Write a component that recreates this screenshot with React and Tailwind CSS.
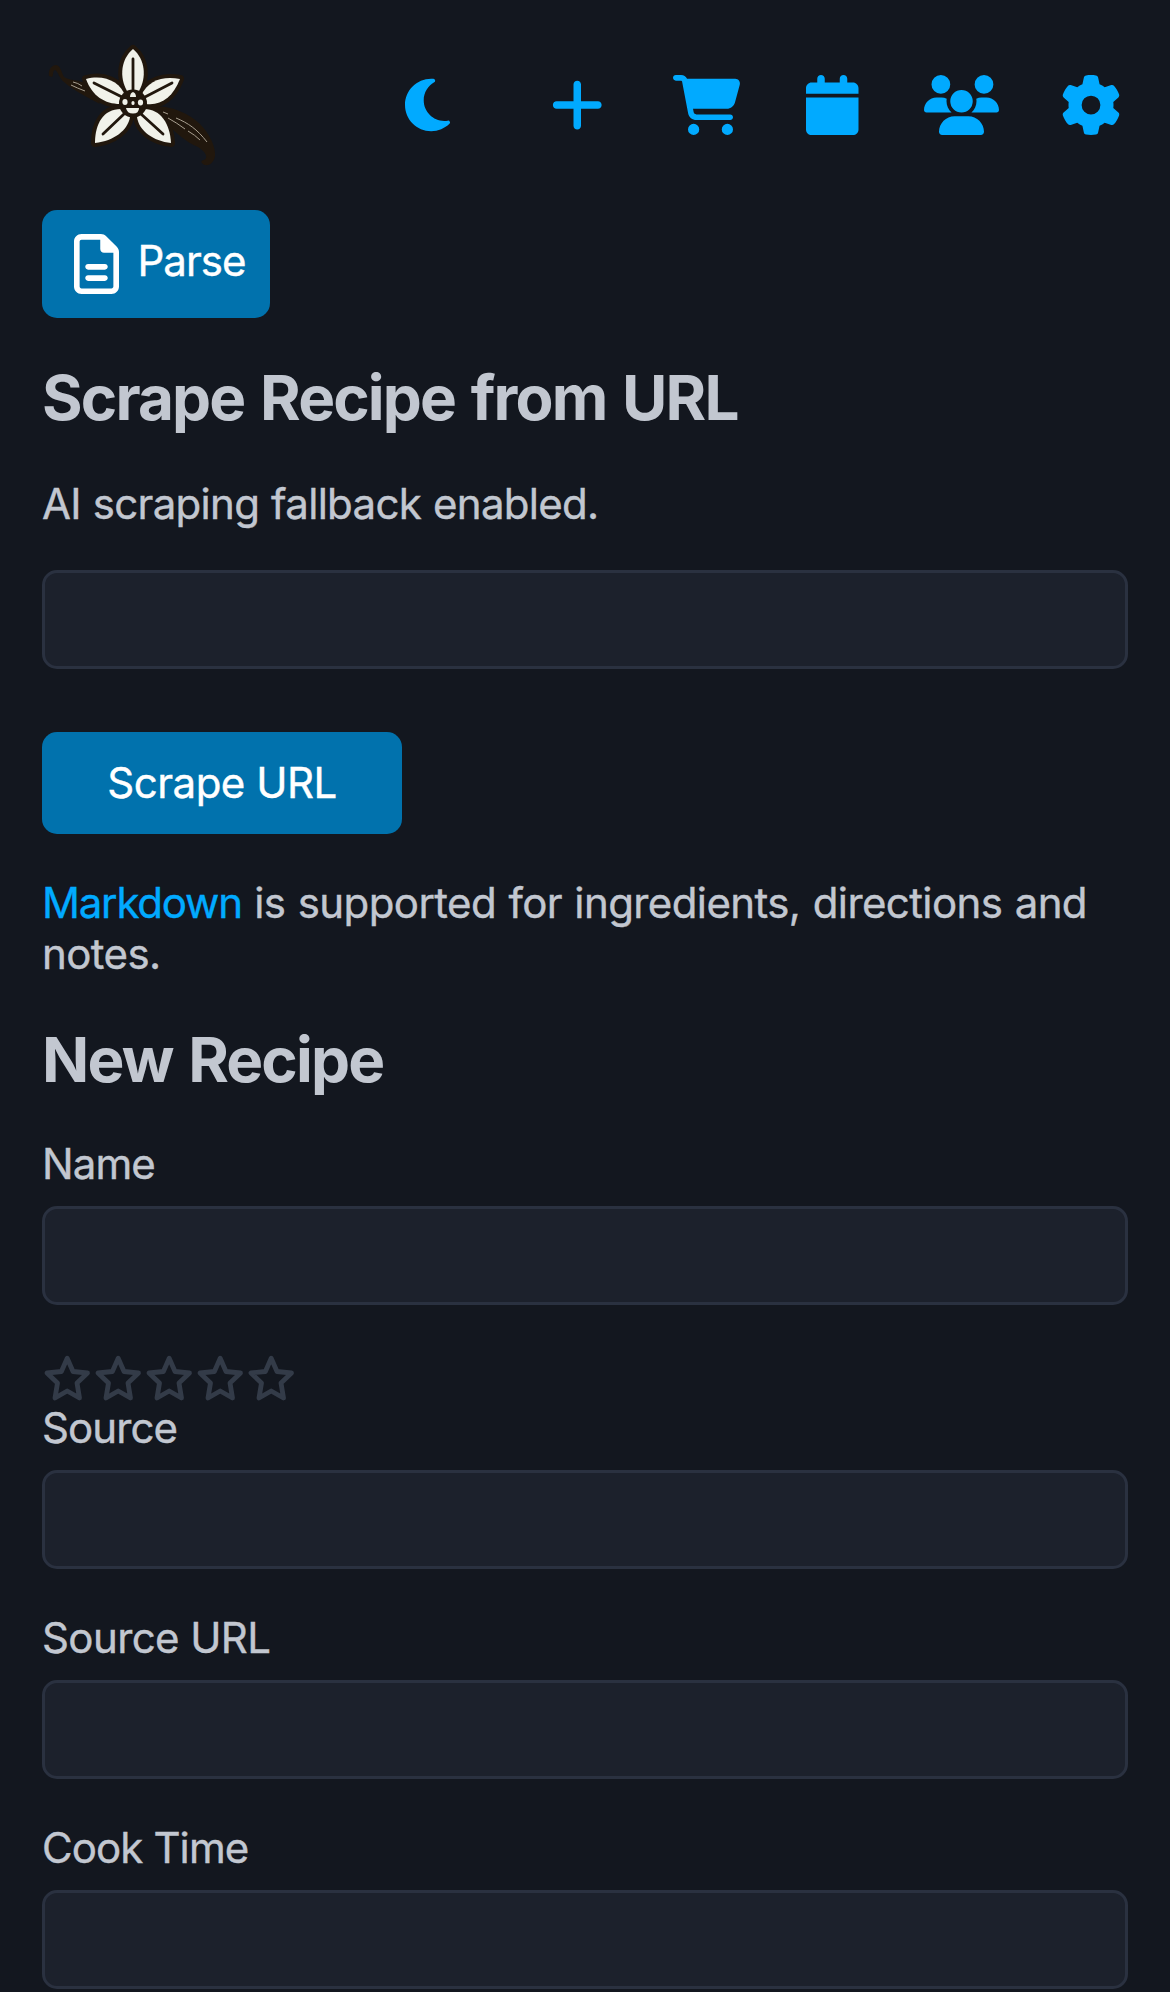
import { FaMoon, FaPlus, FaCartShopping, FaCalendar, FaUsers, FaGear, FaRegFileLines } from "react-icons/fa6";

function VanillaLogo() {
  return (
    <svg viewBox="0 0 200 150" className="h-[150px] w-[200px] shrink-0" fill="none" aria-label="Vanilla flower">
      <path d="M19 46C18 39 22 35 26 35C31 36 31 42 34 47C38 50 47 50 56 53L70 74C56 67 42 59 34 52C29 48 28 41 25 40C22 41 24 45 22 47Z" fill="#21170d" />
      <path d="M122 76C143 76 158 83 170 94C180 104 186 118 185 126C184 132 180 136 175 135C171 134 170 130 174 130C179 128 175 121 168 117C156 112 147 104 136 93Z" fill="#21170d" />
      <path d="M41 55Q47 58 55 61M43 52Q48 53 52 56M133 82L138 84M138 88Q147 93 155 99M146 88C158 93 167 99 177 112M158 101Q165 105 170 110" stroke="#a89f90" strokeWidth="1" />
      <g stroke="#21170d" strokeWidth="8" strokeLinejoin="round" fill="#21170d">
        <path d="M97 61C89 47 91 29 103 19C115 29 117 47 109 61Z" />
        <path d="M90 74C75 74 62 66 56 49C74 44 91 52 95 66Z" />
        <path d="M111 66C118 50 133 46 150 49C143 67 131 76 116 74Z" />
        <path d="M91 79C73 79 65 94 65 113C84 111 98 100 100 87Z" />
        <path d="M107 87C109 101 123 111 141 113C140 94 131 79 114 79Z" />
      </g>
      <g fill="#f1f2ea">
        <path d="M97 61C89 47 91 29 103 19C115 29 117 47 109 61Z" />
        <path d="M90 74C75 74 62 66 56 49C74 44 91 52 95 66Z" />
        <path d="M111 66C118 50 133 46 150 49C143 67 131 76 116 74Z" />
        <path d="M91 79C73 79 65 94 65 113C84 111 98 100 100 87Z" />
        <path d="M107 87C109 101 123 111 141 113C140 94 131 79 114 79Z" />
      </g>
      <path d="M103 29V61M64 53L92 67M142 53L115 67M73 104L94 84M133 104L111 84" stroke="#21170d" strokeWidth="2.800" strokeLinecap="round" />
      <circle cx="103" cy="73.500" r="14" fill="#21170d" />
      <g fill="#f1f2ea">
        <path d="M100 67Q100 63 103 62Q106 63 106 67Z" />
        <ellipse cx="95" cy="72" rx="2.600" ry="3" />
        <ellipse cx="110.500" cy="72.500" rx="2.600" ry="3" />
        <rect x="101.500" y="71" width="3" height="4" rx="1.500" />
        <path d="M96 78H109Q109 83.500 103 83.500T96 78Z" />
      </g>
    </svg>
  );
}

function Star() {
  return (
    <svg viewBox="0 0 51 51" className="size-[51px]" fill="none" stroke="#333b48" strokeWidth="4.800" strokeLinejoin="round">
      <path d="M25.200 5.200L31 18.500L45.500 20L35 30L37.500 45L25.200 38L13 45L15.500 30L5 20L19.400 18.500Z" />
    </svg>
  );
}

const Input = ({ label }) => (
  <input aria-label={label} className="block h-[99px] w-full rounded-[15px] border-[3px] border-[#2a3140] bg-[#1c212c] outline-none" />
);

const Field = ({ label }) => (
  <div className="flow-root">
    <div className="-mt-[2px] mb-[17px] h-[51px]">{label}</div>
    <Input label={label} />
  </div>
);

const Heading = ({ children }) => (
  <h1 className="mt-[43px] h-[74px] text-[62px] leading-[74px] font-bold tracking-[-1.85px] [word-spacing:2.8px] [-webkit-text-stroke:0px]">{children}</h1>
);

export default function App() {
  return (
    <div className="h-[1992px] overflow-hidden bg-[#13171f] px-[42px] font-['Inter',sans-serif] text-[42px] leading-[51px] tracking-[-0.9px] text-[#c2c7d0] [-webkit-text-stroke:0.4px]">
      <nav className="-ml-3 flex h-[210px] items-start pt-[30px] text-[#01aaff]">
        <VanillaLogo />
        <div className="mt-[45px] ml-[175px] flex">
          <FaMoon className="h-[60px] w-[45px]" />
          <FaPlus className="ml-[101px] h-[60px] w-[52.5px]" />
          <FaCartShopping className="ml-[69.5px] h-[60px] w-[67.5px]" />
          <FaCalendar className="ml-[65.5px] h-[60px] w-[52.5px]" />
          <FaUsers className="ml-[65.5px] h-[60px] w-[75px]" />
          <FaGear className="ml-[61.5px] size-[60px]" />
        </div>
      </nav>
      <button className="flex h-[108px] w-[228px] items-center rounded-[15px] bg-[#0172ad] pl-[31.5px] text-white">
        <FaRegFileLines className="h-[60px] w-[45px]" />
        <span className="-mt-[7px] ml-[19px] tracking-[-1px]">Parse</span>
      </button>
      <Heading>Scrape Recipe from URL</Heading>
      <p className="mt-[43px] mb-[41px] tracking-[-0.7px] [word-spacing:0.8px]">AI scraping fallback enabled.</p>
      <Input label="Recipe URL" />
      <button className="mt-[63px] block h-[102px] w-[360px] rounded-[15px] bg-[#0172ad] pb-px tracking-[-0.5px] text-white">Scrape URL</button>
      <p className="mt-[43px] tracking-[-0.6px] [word-spacing:1.2px]">
        <a className="tracking-[-1.2px] text-[#01aaff]">Markdown</a> is supported for ingredients, directions and<br />notes.
      </p>
      <div className="flow-root pt-px"><Heading>New Recipe</Heading></div>
      <div className="mt-[43px]"><Field label="Name" /></div>
      <div className="mt-[48px] flex h-[51px]">
        <Star /><Star /><Star /><Star /><Star />
      </div>
      <Field label="Source" />
      <div className="mt-[45px] tracking-[-0.6px]"><Field label="Source URL" /></div>
      <div className="mt-[45px]"><Field label="Cook Time" /></div>
    </div>
  );
}
